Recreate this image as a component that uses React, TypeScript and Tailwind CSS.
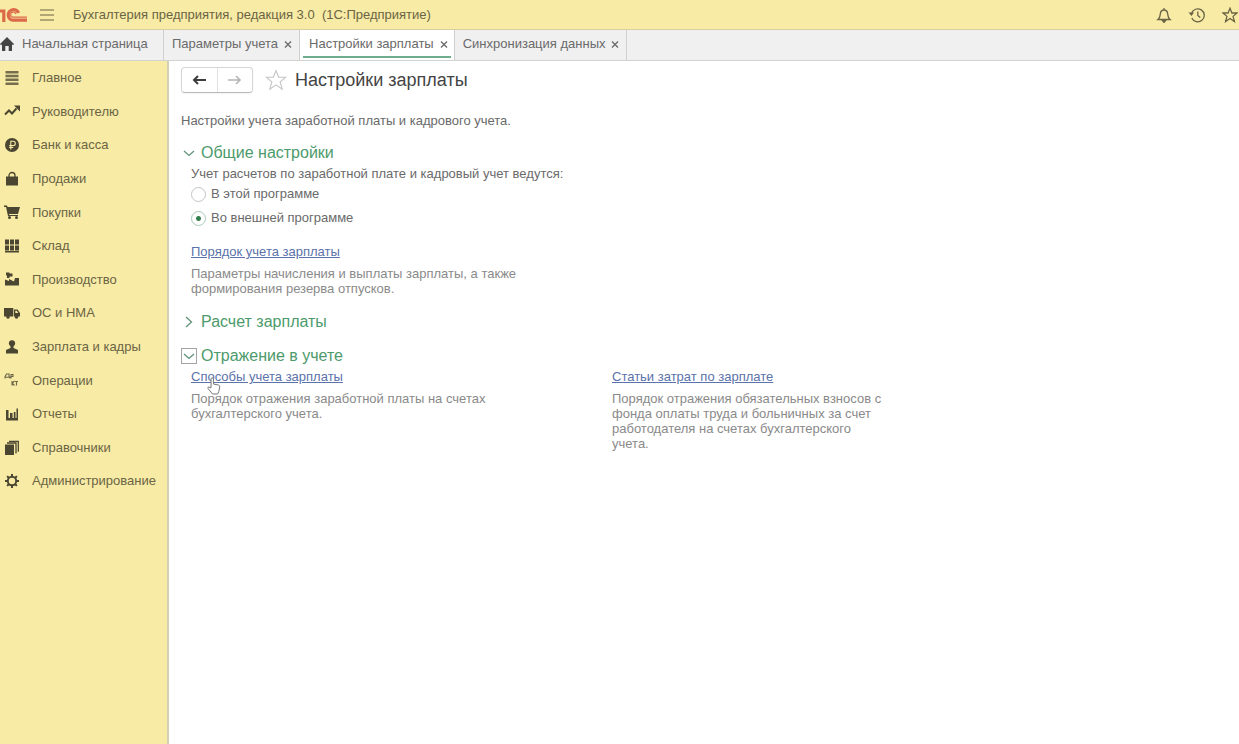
import type { ReactNode } from "react";

function Icon({ children }: { children: ReactNode }) {
    return (
        <svg viewBox="0 0 16 16" className="size-4 shrink-0" fill="currentColor" aria-hidden="true">
            {children}
        </svg>
    );
}

const menu: { title: string; icon: ReactNode }[] = [
    {
        title: "Главное",
        icon: <path d="M1.500 1h13v2.500h-13zM1.500 4.800h13v2.500h-13zM1.500 8.600h13v2.500h-13zM1.500 12.400h13v2.500h-13z" opacity=".75" />,
    },
    {
        title: "Руководителю",
        icon: (
            <>
                <path d="M1 11.500l4-4 3 3 4.500-5" fill="none" stroke="currentColor" strokeWidth="2" />
                <path d="M10 2.500h6V8.500z" />
            </>
        ),
    },
    {
        title: "Банк и касса",
        icon: (
            <>
                <circle cx="8" cy="8" r="7" />
                <path d="M6.800 12.500V4.300h2.400a2 2 0 010 4.200H5.200M5.200 10.400h4" fill="none" stroke="#f7eba6" strokeWidth="1.100" />
            </>
        ),
    },
    {
        title: "Продажи",
        icon: (
            <>
                <path d="M2 5.500h12v9H2z" />
                <path d="M5 8V4.500a3 3 0 016 0V8" fill="none" stroke="currentColor" strokeWidth="1.300" />
            </>
        ),
    },
    {
        title: "Покупки",
        icon: (
            <>
                <path d="M0 1.500h3l.6 1.500H16l-2 7H5l.3 1H14V12H4L2 3H0z" />
                <circle cx="5.500" cy="13.500" r="1.500" />
                <circle cx="12.500" cy="13.500" r="1.500" />
            </>
        ),
    },
    {
        title: "Склад",
        icon: <path d="M1 1.500h4v5H1zM6 1.500h4v5H6zM11 1.500h4v5h-4zM1 7.500h4v5H1zM6 7.500h4v5H6zM11 7.500h4v5h-4zM1 13h14v1.500H1z" />,
    },
    {
        title: "Производство",
        icon: <path d="M1 14.500V8.500l4 1.500V8l5 2.500 1-3.500h4v7.500zM2 1.500h3.500v3H2zM5.500 2.500h3v3h-3zM3 4.500h2.500V7H3z" />,
    },
    {
        title: "ОС и НМА",
        icon: (
            <>
                <path d="M0 3h9.300v8.500H0zM10 4.500h3.500L16 8v3.500h-6zm1.300 1.200V8h3l-1.500-2.300z" fillRule="evenodd" />
                <circle cx="4" cy="12" r="1.800" />
                <circle cx="12.500" cy="12" r="1.800" />
            </>
        ),
    },
    {
        title: "Зарплата и кадры",
        icon: (
            <>
                <circle cx="8" cy="4.300" r="3.100" />
                <path d="M6.500 7h3v2l4.500 2v3.500H2V11l4.500-2z" />
            </>
        ),
    },
    {
        title: "Операции",
        icon: (
            <path
                d="M1 6.500V5l1.500-3H5v3h1v1.500M1 5.200h5M7 6.500V2.500h2v2H7M8 9v4.500M8 11.500L10.500 9M8 11l2.500 2.500M11 9.500h3M12.500 9.500v4"
                fill="none"
                stroke="currentColor"
                strokeWidth="1.100"
                opacity=".8"
            />
        ),
    },
    {
        title: "Отчеты",
        icon: <path d="M2 4h2.500v8H6V7h2.500v5h1.300V6h1.700v6h1V2.500H14v12H2z" />,
    },
    {
        title: "Справочники",
        icon: (
            <>
                <path d="M1 4.500h9v10.500H1z" />
                <path d="M3 3h9v10.500M5 1.300h9.300v10.500" fill="none" stroke="currentColor" strokeWidth="1.300" />
            </>
        ),
    },
    {
        title: "Администрирование",
        icon: (
            <>
                <circle cx="8" cy="8" r="4.200" fill="none" stroke="currentColor" strokeWidth="2" />
                <path
                    d="M8 1v2.500M8 12.500V15M1 8h2.500M12.500 8H15M3.100 3.100l1.700 1.700M11.200 11.200l1.700 1.700M3.100 12.900l1.700-1.700M11.200 4.800l1.700-1.700"
                    stroke="currentColor"
                    strokeWidth="2"
                />
            </>
        ),
    },
];

const tabs = [
    { title: "Параметры учета", active: false },
    { title: "Настройки зарплаты", active: true },
    { title: "Синхронизация данных", active: false },
];

function Star({ className }: { className: string }) {
    return (
        <svg viewBox="0 0 20 20" className={className} fill="none" stroke="currentColor" aria-hidden="true">
            <path d="M10 1.500l2.400 6h6.400l-5 4.200 1.800 6.600-5.600-3.900-5.600 3.900 1.800-6.600-5-4.200h6.400z" />
        </svg>
    );
}

function Header() {
    return (
        <header className="flex h-[30px] items-center border-b border-[#d9cf9c] bg-[#f7eba6] text-[#6b6444]">
            <svg viewBox="0 0 28 16" className="h-4 w-7 shrink-0" fill="none" stroke="#dc6a4a" strokeWidth="3.200" aria-label="1С">
                <path d="M0 4h3.800V15" />
                <path d="M18.500 6A5.300 5.300 0 1013 13.200H27" />
                <path d="M15.800 7a2.600 2.600 0 10-2.800 3.200H27" strokeWidth="1.200" />
            </svg>
            <button type="button" aria-label="Меню" className="ml-3">
                <svg viewBox="0 0 14 14" className="size-[14px]" stroke="currentColor" strokeWidth="1.200">
                    <path d="M0 2h14M0 7h14M0 12h14" />
                </svg>
            </button>
            <span className="ml-[19px] whitespace-pre text-[13px]">Бухгалтерия предприятия, редакция 3.0  (1С:Предприятие)</span>
            <div className="ml-auto flex shrink-0 items-center gap-4 pr-px">
                <button type="button" aria-label="Уведомления">
                    <svg viewBox="0 0 16 16" className="size-4" fill="none" stroke="currentColor" strokeWidth="1.300">
                        <path d="M8 1v2M2 12.500c2-1.500 2-3 2.200-5C4.400 4.500 6 3 8 3s3.600 1.500 3.800 4.500c.2 2 .2 3.500 2.200 5z" />
                        <path d="M6 13h4l-2 2.500z" fill="currentColor" />
                    </svg>
                </button>
                <button type="button" aria-label="История">
                    <svg viewBox="0 0 18 16" className="h-4 w-[18px]" fill="none" stroke="currentColor" strokeWidth="1.300">
                        <path d="M3.500 6.500A6.500 6.500 0 113.800 11M9.800 4.500V8.500l2.500 2" />
                        <path d="M.5 5.500h5.500L3.500 9z" fill="currentColor" stroke="none" />
                    </svg>
                </button>
                <button type="button" aria-label="Избранное">
                    <Star className="size-4 stroke-[1.600]" />
                </button>
            </div>
        </header>
    );
}

function TabBar() {
    return (
        <nav className="flex h-[31px] border-b border-[#d2d2cf] bg-[#f0f0f1] text-[13px] text-[#6a6a6a]">
            <button type="button" className="flex w-[164px] shrink-0 items-center gap-2 whitespace-nowrap border-r border-[#d0d0d0] pb-[2px]">
                <svg viewBox="0 0 14 14" className="size-[14px] text-[#444]" fill="currentColor" aria-hidden="true">
                    <path d="M7 0l7 7-1 1.200-1-.9V14H8.700V9H5.300v5H2V7.300l-1 .9L0 7z" />
                </svg>
                Начальная страница
            </button>
            {tabs.map((tab) => (
                <div
                    key={tab.title}
                    className={
                        tab.active
                            ? "flex shrink-0 border-r border-[#d0d0d0] bg-white px-[3px]"
                            : "flex shrink-0 border-r border-[#d0d0d0] px-[3px]"
                    }
                >
                    <div
                        className={
                            tab.active
                                ? "mb-[2px] flex items-center gap-[6px] border-b-2 border-[#6fae8c] pt-[2px] pr-[3px] pl-[6px]"
                                : "flex items-center gap-[6px] pr-1 pb-[2px] pl-[5px]"
                        }
                    >
                        <button type="button" className="whitespace-nowrap">{tab.title}</button>
                        <button type="button" aria-label={`Закрыть ${tab.title}`}>
                            <svg viewBox="0 0 8 8" className="size-2" stroke="currentColor" strokeWidth="1.300">
                                <path d="M1 1.500l6 6M7 1.500l-6 6" />
                            </svg>
                        </button>
                    </div>
                </div>
            ))}
        </nav>
    );
}

function Sidebar() {
    return (
        <aside className="w-[169px] shrink-0 border-r-2 border-[#d5d0b4] bg-[#f7eba6]">
            <ul className="grid h-[437px] auto-rows-fr text-[13px] text-[#6b6444]">
                {menu.map((item) => (
                    <li key={item.title} className="flex">
                        <a href="#" className="flex items-center gap-3 pl-1">
                            <span className="text-[#4b4631]">
                                <Icon>{item.icon}</Icon>
                            </span>
                            {item.title}
                        </a>
                    </li>
                ))}
            </ul>
        </aside>
    );
}

function SectionTitle({ title, open, focused }: { title: string; open?: boolean; focused?: boolean }) {
    return (
        <h2 className="text-[16px] leading-5 text-[#4d9a6b]">
            <button type="button" aria-expanded={!!open} className="flex items-center gap-1">
                <span
                    className={
                        focused
                            ? "flex size-4 items-center justify-center border border-[#a5a5a5]"
                            : "flex size-4 items-center justify-center"
                    }
                >
                    <svg viewBox="0 0 12 12" className="size-3 shrink-0" fill="none" stroke="#62937a" strokeWidth="1.300">
                        {open ? <path d="M1 4l5 4.500L11 4" /> : <path d="M3 1l5.500 5L3 11" />}
                    </svg>
                </span>
                {title}
            </button>
        </h2>
    );
}

function SettingLink({ title, children }: { title: string; children: ReactNode }) {
    return (
        <div>
            <a href="#" className="block w-fit text-[13px] leading-4 text-[#5b72aa] underline">
                {title}
            </a>
            <p className="mt-[6px] text-[13px] leading-[15px] text-[#8a8a8a]">{children}</p>
        </div>
    );
}

function Radio({ label, defaultChecked }: { label: string; defaultChecked?: boolean }) {
    return (
        <label className="flex h-6 w-fit items-center gap-[5px]">
            <input
                type="radio"
                name="payroll-place"
                defaultChecked={defaultChecked}
                className="size-[15px] appearance-none rounded-full border border-[#c4c4c4] bg-white checked:border-[#a9c9b6] checked:bg-[radial-gradient(circle,#33804f_2px,transparent_3px)]"
            />
            {label}
        </label>
    );
}

export default function App() {
    return (
        <div className="flex min-h-screen flex-col bg-white font-['Liberation_Sans',Arial,sans-serif]">
            <Header />
            <TabBar />
            <div className="flex grow">
                <Sidebar />
                <main className="grow px-3 pt-[6px] text-[13px] leading-4 text-[#6a6a6a]">
                    <div className="flex items-center">
                        <div className="flex h-[26px] w-[72px] rounded-sm border border-[#d6d6d6] border-b-[#b9b9b9] shadow-xs">
                            <button type="button" aria-label="Назад" className="flex flex-1 items-center justify-center border-r border-[#e2e2e2] text-[#3c3c3c]">
                                <svg viewBox="0 0 14 10" className="h-[10px] w-[14px]" fill="none" stroke="currentColor" strokeWidth="2">
                                    <path d="M14 5H2M6 1L2 5l4 4" />
                                </svg>
                            </button>
                            <button type="button" aria-label="Вперед" className="flex flex-1 items-center justify-center text-[#b5b5b5]">
                                <svg viewBox="0 0 14 10" className="h-[10px] w-[14px]" fill="none" stroke="currentColor" strokeWidth="1.600">
                                    <path d="M0 5h12M8 1l4 4-4 4" />
                                </svg>
                            </button>
                        </div>
                        <button type="button" aria-label="Добавить в избранное" className="ml-3 text-[#c4c4c4]">
                            <Star className="size-[22px]" />
                        </button>
                        <h1 className="ml-2 text-[18px] leading-6 text-[#444]">Настройки зарплаты</h1>
                    </div>

                    <p className="mt-5">Настройки учета заработной платы и кадрового учета.</p>

                    <section className="mt-[14px]">
                        <SectionTitle title="Общие настройки" open />
                        <div className="pl-[10px]">
                            <fieldset className="mt-[3px]">
                                <legend>Учет расчетов по заработной плате и кадровый учет ведутся:</legend>
                                <Radio label="В этой программе" />
                                <Radio label="Во внешней программе" defaultChecked />
                            </fieldset>
                            <div className="mt-[14px] max-w-[340px]">
                                <SettingLink title="Порядок учета зарплаты">
                                    Параметры начисления и выплаты зарплаты, а также формирования резерва отпусков.
                                </SettingLink>
                            </div>
                        </div>
                    </section>

                    <section className="mt-4">
                        <SectionTitle title="Расчет зарплаты" />
                    </section>

                    <section className="mt-[14px]">
                        <SectionTitle title="Отражение в учете" open focused />
                        <div className="mt-[3px] grid grid-cols-[340px_276px] gap-x-[81px] pl-[10px]">
                            <div className="relative">
                                <SettingLink title="Способы учета зарплаты">
                                    Порядок отражения заработной платы на счетах бухгалтерского учета.
                                </SettingLink>
                                <svg viewBox="0 0 14 18" className="absolute top-2 left-4 h-[18px] w-[14px]" fill="#fff" stroke="#777" aria-hidden="true">
                                    <path d="M4 11V2a1.200 1.200 0 012.400 0v5l5 1q1.600.4 1.300 2.200l-.9 4.300-1.200 2.500H5.500L1 11.500q-.6-1.500 1-1.500z" />
                                </svg>
                            </div>
                            <SettingLink title="Статьи затрат по зарплате">
                                Порядок отражения обязательных взносов с фонда оплаты труда и больничных за счет работодателя на счетах
                                бухгалтерского учета.
                            </SettingLink>
                        </div>
                    </section>
                </main>
            </div>
        </div>
    );
}
